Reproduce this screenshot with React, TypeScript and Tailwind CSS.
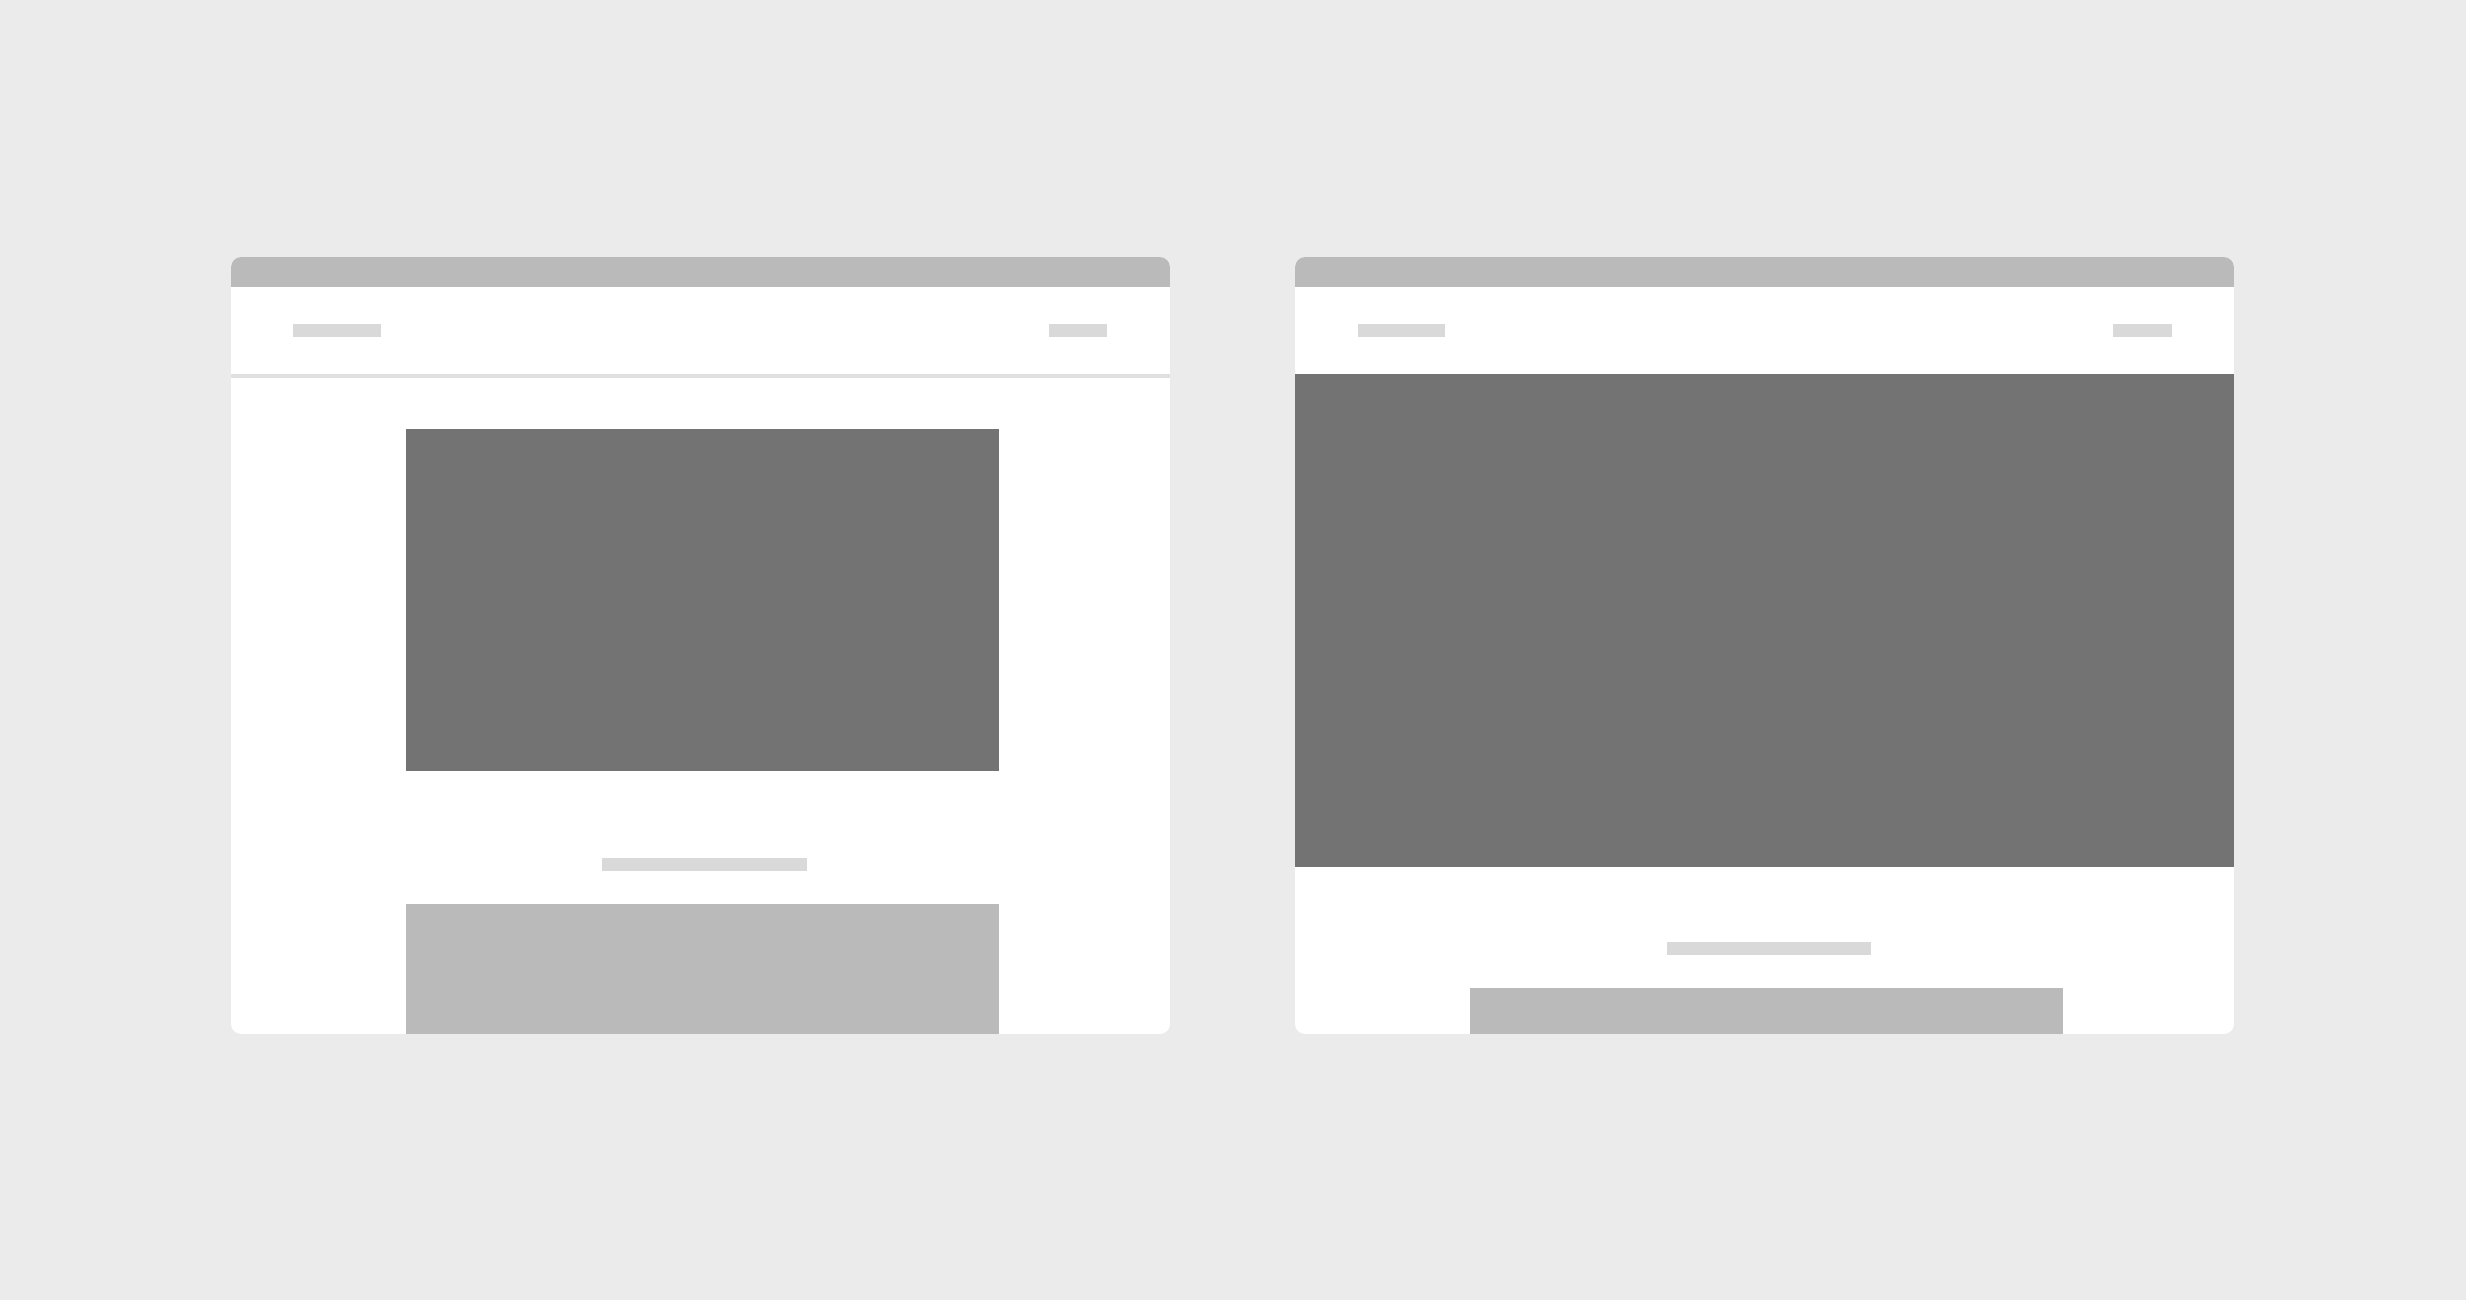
export default function App() {
  return (
    <div className="w-[2466px] h-[1300px] bg-[#ebebeb] flex gap-[125px] pl-[231px] pt-[257px]">
      {/* Left card */}
      <div className="w-[939px] h-[777px] shrink-0 bg-white rounded-[10px] overflow-hidden flex flex-col">
        <div className="h-[30px] bg-[#bababa] shrink-0" />
        <div className="h-[87px] shrink-0 flex items-center justify-between pl-[62px] pr-[63px]">
          <div className="w-[88px] h-[13px] bg-[#d9d9d9]" />
          <div className="w-[58px] h-[13px] bg-[#d9d9d9]" />
        </div>
        <div className="h-[4px] bg-[#e0e0e0] shrink-0" />
        <div className="pl-[175px] pt-[51px] flex flex-col">
          <div className="w-[593px] h-[342px] bg-[#737373]" />
          <div className="w-[593px] flex pt-[87px] pl-[196px]">
            <div className="w-[205px] h-[13px] bg-[#d9d9d9]" />
          </div>
          <div className="w-[593px] h-[200px] bg-[#bababa] mt-[33px]" />
        </div>
      </div>
      {/* Right card */}
      <div className="w-[939px] h-[777px] shrink-0 bg-white rounded-[10px] overflow-hidden flex flex-col">
        <div className="h-[30px] bg-[#bababa] shrink-0" />
        <div className="h-[87px] shrink-0 flex items-center justify-between pl-[63px] pr-[62px]">
          <div className="w-[87px] h-[13px] bg-[#d9d9d9]" />
          <div className="w-[59px] h-[13px] bg-[#d9d9d9]" />
        </div>
        <div className="h-[493px] bg-[#737373] shrink-0" />
        <div className="pl-[175px] flex flex-col">
          <div className="w-[593px] flex pt-[75px] pl-[197px]">
            <div className="w-[204px] h-[13px] bg-[#d9d9d9]" />
          </div>
          <div className="w-[593px] h-[200px] bg-[#bababa] mt-[33px]" />
        </div>
      </div>
    </div>
  );
}
